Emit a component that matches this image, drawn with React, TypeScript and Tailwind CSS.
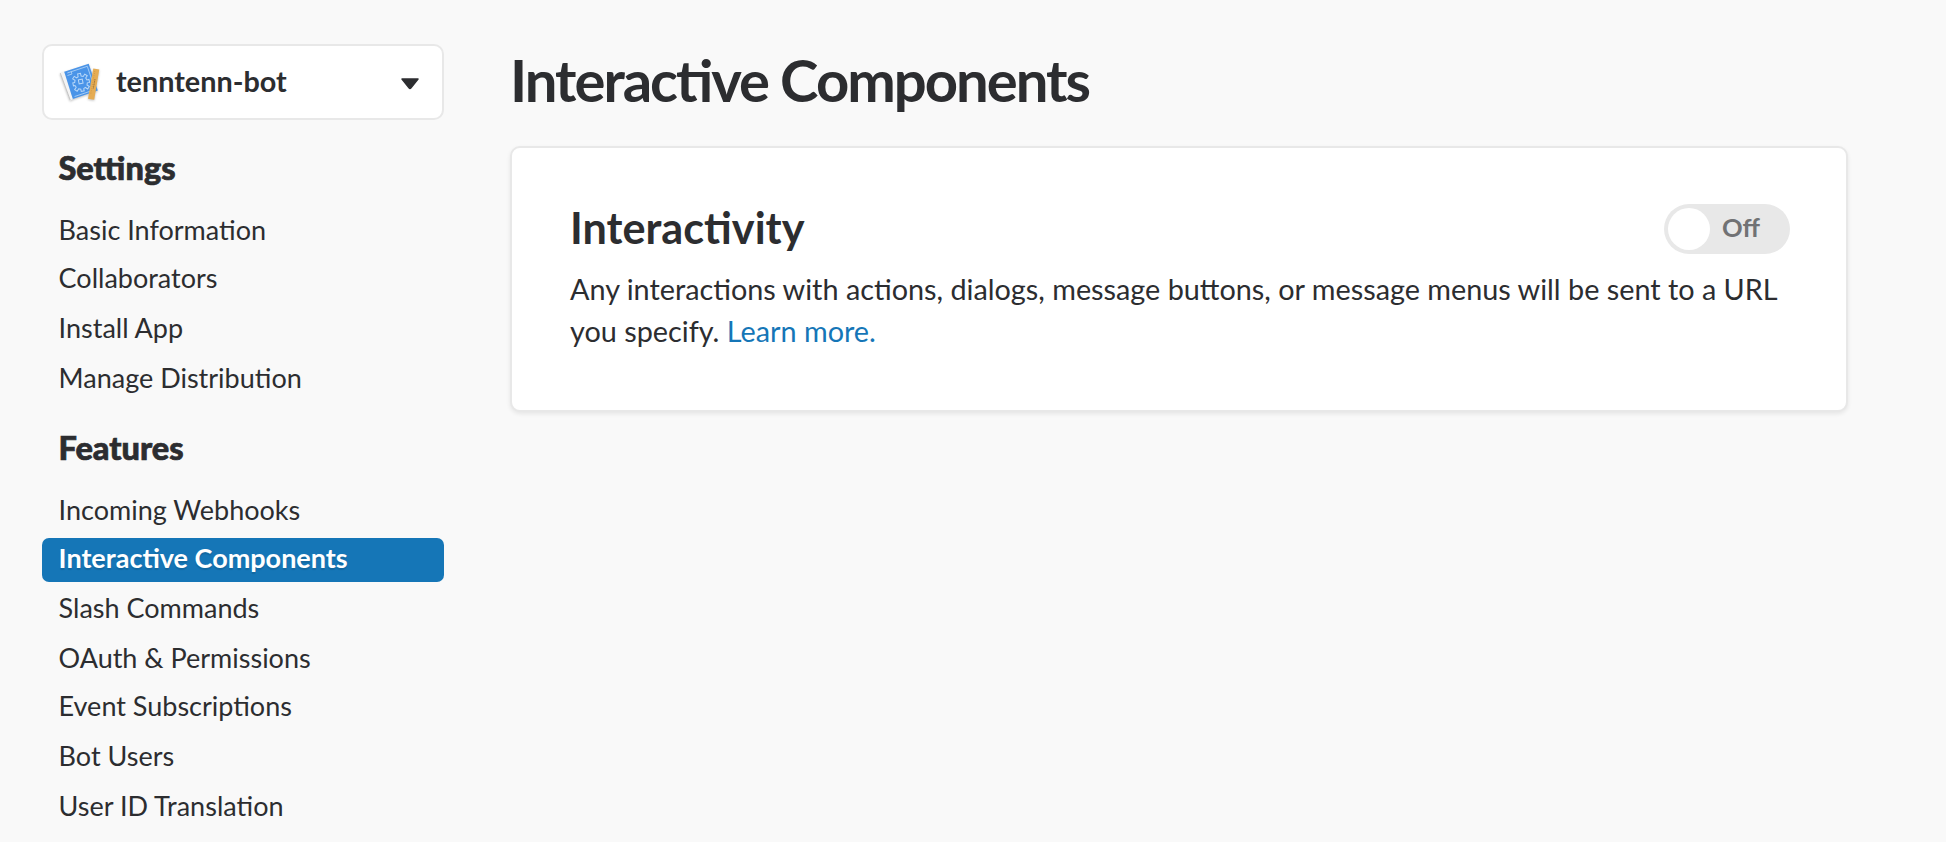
const settings = [
  { label: "Basic Information", gap: "" },
  { label: "Collaborators", gap: "mt-1" },
  { label: "Install App", gap: "mt-1.5" },
  { label: "Manage Distribution", gap: "mt-1.5" },
];

const features = [
  { label: "Incoming Webhooks", gap: "" },
  { label: "Interactive Components", gap: "mt-1", active: true },
  { label: "Slash Commands", gap: "mt-1.5" },
  { label: "OAuth & Permissions", gap: "mt-1.5" },
  { label: "Event Subscriptions", gap: "mt-1" },
  { label: "Bot Users", gap: "mt-1.5" },
  { label: "User ID Translation", gap: "mt-1.5" },
];

type Item = { label: string; gap: string; active?: boolean };

function BlueprintIcon() {
  return (
    <svg
      width="40"
      height="40"
      viewBox="0 0 40 40"
      className="shrink-0 overflow-visible drop-shadow-[0_1px_1px_rgba(0,0,0,0.25)]"
    >
      <path d="M2 11 6.700 9.500l9 27.300-3.500 1.700z" fill="#f4f4f4" />
      <path d="M2.300 11.200 12.200 38" stroke="#c4c4c4" strokeWidth="1" />
      <path d="M6.200 9.800 30.700 1.800 39.800 28.600 14.800 37z" fill="#4a94e8" />
      <g fill="none" stroke="#b9d8f8">
        <path d="M9.300 11 29.300 4.300l7.800 23.300-20.500 6.900" strokeWidth=".8" />
        <path d="m9.500 13.500 4.500-1.500-.9-2.500" strokeWidth=".8" />
        <g transform="translate(22.700 19.500) rotate(-12)" strokeWidth="1">
          <path d="M-1.500-8h3v2.800l2 .8 2-2 2.100 2.100-2 2 .8 2h2.100v3H6.200l-.8 2 2 2-2.100 2.100-2-2-1.800.8v2.200h-3V7.600l-2-.8-2 2-2.100-2.100 2-2-.8-2H-8v-3h1.900l.8-2-2-2 2.100-2.100 2 2 1.700-.8z" />
          <path d="M-2-2h4v4h-4z" />
        </g>
      </g>
      <path d="m35.300 6.500 6 1-5.100 30.200-6.200-1z" fill="#e5ac54" />
      <path d="m36.800 9-4 23" stroke="#c58d3b" strokeWidth=".7" strokeDasharray=".8 1.400" />
      <path d="m37 17-1.700 9.500" stroke="#9c7436" strokeWidth="1" strokeDasharray="1.200 .5" />
    </svg>
  );
}

function NavGroup({ title, items }: { title: string; items: Item[] }) {
  return (
    <section>
      <h3 className="pl-[16.500px] text-[32.500px] font-black leading-[39px] [-webkit-text-stroke:0.7px_#2c2d30]">
        {title}
      </h3>
      <ul className="mt-[23px]">
        {items.map((item) => (
          <li key={item.label} className={item.gap}>
            <a
              href="#"
              className={
                item.active
                  ? "block h-11 rounded-[7px] bg-[#1576b7] pl-[16.600px] text-[27px] font-bold leading-[39px] text-white [text-shadow:0_2px_1px_rgba(0,0,0,0.12)]"
                  : "block h-11 pl-[16.600px] text-[27px] leading-[39px]"
              }
            >
              {item.label}
            </a>
          </li>
        ))}
      </ul>
    </section>
  );
}

export default function App() {
  return (
    <div className="flex h-[842px] w-full overflow-hidden bg-[#f9f9f9] pl-[42px] font-['Lato',sans-serif] text-[#2c2d30]">
      <aside className="w-[402px] shrink-0 pt-11">
        <button
          type="button"
          className="flex h-[76px] w-full items-center rounded-[10px] border-2 border-[#e8e8e8] bg-white pl-3.5 pr-[22px]"
        >
          <BlueprintIcon />
          <span className="ml-[18px] pb-0.5 text-[28.800px] font-bold leading-[34px]">tenntenn-bot</span>
          <svg width="20" height="12" viewBox="0 0 20 12" className="ml-auto mt-[3px]">
            <path d="M2 1h16L11 9.800q-1 1.200-2 0z" fill="#2c2d30" stroke="#2c2d30" strokeWidth="1.500" strokeLinejoin="round" />
          </svg>
        </button>
        <div className="mt-7">
          <NavGroup title="Settings" items={settings} />
        </div>
        <div className="mt-[26px]">
          <NavGroup title="Features" items={features} />
        </div>
      </aside>

      <main className="ml-[66px] w-[1338px] shrink-0 pt-[45px]">
        <h1 className="text-[58px] font-bold leading-[69px] tracking-[-2px] [font-feature-settings:'liga']">
          Interactive Components
        </h1>
        <section className="mt-8 h-[266px] rounded-[10px] border-2 border-[#e8e8e8] bg-white pl-[58px] pr-14 pt-[53px] shadow-[0_2px_4px_rgba(0,0,0,0.08)]">
          <div className="flex items-start justify-between">
            <h2 className="text-[43.200px] font-bold leading-[52px]">Interactivity</h2>
            <button
              type="button"
              className="mt-[3px] flex h-[50px] w-[126px] items-center rounded-full bg-[#e8e8e8] pl-1"
            >
              <span className="size-[42px] rounded-full bg-white" />
              <span className="ml-3 pb-[3px] text-[25.600px] font-bold leading-[31px] text-[#717274]">Off</span>
            </button>
          </div>
          <p className="mt-[14px] text-[28.800px] leading-[42px]">
            Any interactions with actions, dialogs, message buttons, or message menus will be sent to a URL
            you specify.{" "}
            <a href="#" className="text-[#1576b7]">
              Learn more.
            </a>
          </p>
        </section>
      </main>
    </div>
  );
}
